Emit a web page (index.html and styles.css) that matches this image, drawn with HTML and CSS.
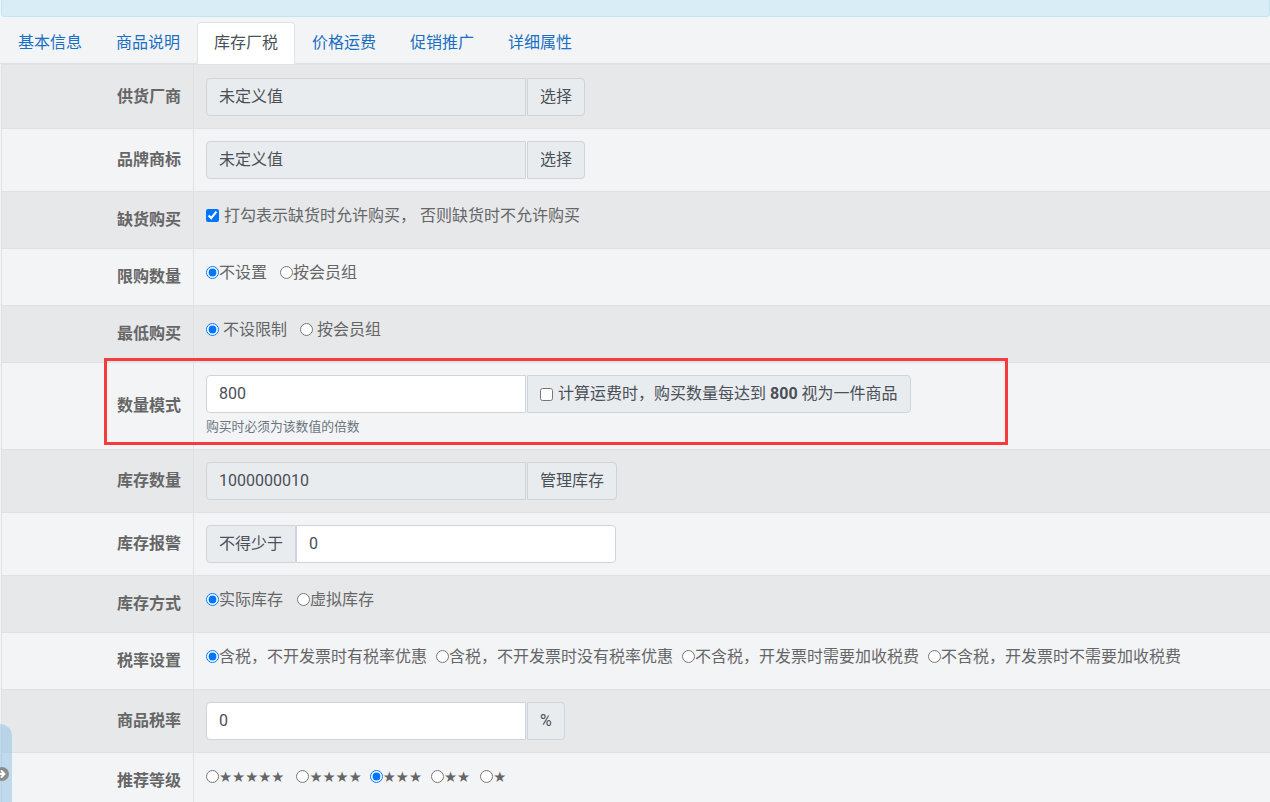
FILE: index.html
```html
<!DOCTYPE html>
<html lang="zh-CN">
<head>
<meta charset="utf-8">
<title>库存厂税</title>
<link rel="stylesheet" href="styles.css">
</head>
<body>
<div class="page">
  <div class="alert"></div>
  <div class="tabbar">
    <ul class="tabs">
      <li class="tab">基本信息</li>
      <li class="tab">商品说明</li>
      <li class="tab active">库存厂税</li>
      <li class="tab">价格运费</li>
      <li class="tab">促销推广</li>
      <li class="tab">详细属性</li>
    </ul>
  </div>
  <table class="form">
    <tr class="dark first">
      <th>供货厂商</th>
      <td><div class="group"><span class="ctl ro">未定义值</span><span class="addon">选择</span></div></td>
    </tr>
    <tr class="light">
      <th>品牌商标</th>
      <td><div class="group"><span class="ctl ro">未定义值</span><span class="addon">选择</span></div></td>
    </tr>
    <tr class="dark">
      <th>缺货购买</th>
      <td class="txt"><label class="opt"><input type="checkbox" class="chk" checked>打勾表示缺货时允许购买， 否则缺货时不允许购买</label></td>
    </tr>
    <tr class="light">
      <th>限购数量</th>
      <td class="txt"><label class="opt g13"><input type="radio" name="xg" checked>不设置</label><label class="opt"><input type="radio" name="xg">按会员组</label></td>
    </tr>
    <tr class="dark">
      <th>最低购买</th>
      <td class="txt"><label class="opt g13"><input type="radio" name="zd" class="sp" checked>不设限制</label><label class="opt"><input type="radio" name="zd" class="sp">按会员组</label></td>
    </tr>
    <tr class="light">
      <th>数量模式</th>
      <td>
        <div class="group"><span class="ctl">800</span><span class="addon"><input type="checkbox" class="chk">计算运费时，购买数量每达到 <b>800</b> 视为一件商品</span></div>
        <div class="hint">购买时必须为该数值的倍数</div>
      </td>
    </tr>
    <tr class="dark">
      <th>库存数量</th>
      <td><div class="group"><span class="ctl ro">1000000010</span><span class="addon">管理库存</span></div></td>
    </tr>
    <tr class="light">
      <th>库存报警</th>
      <td><div class="group"><span class="addon pre">不得少于</span><span class="ctl">0</span></div></td>
    </tr>
    <tr class="dark">
      <th>库存方式</th>
      <td class="txt"><label class="opt g14"><input type="radio" name="kc" checked>实际库存</label><label class="opt"><input type="radio" name="kc">虚拟库存</label></td>
    </tr>
    <tr class="light">
      <th>税率设置</th>
      <td class="txt"><label class="opt g9"><input type="radio" name="sl" checked>含税，不开发票时有税率优惠</label><label class="opt g9"><input type="radio" name="sl">含税，不开发票时没有税率优惠</label><label class="opt g9"><input type="radio" name="sl">不含税，开发票时需要加收税费</label><label class="opt"><input type="radio" name="sl">不含税，开发票时不需要加收税费</label></td>
    </tr>
    <tr class="dark">
      <th>商品税率</th>
      <td><div class="group"><span class="ctl">0</span><span class="addon">%</span></div></td>
    </tr>
    <tr class="light">
      <th>推荐等级</th>
      <td class="txt"><label class="opt g12"><input type="radio" name="tj"><span class="stars">★★★★★</span></label><label class="opt g8"><input type="radio" name="tj"><span class="stars">★★★★</span></label><label class="opt g9"><input type="radio" name="tj" checked><span class="stars">★★★</span></label><label class="opt g10"><input type="radio" name="tj"><span class="stars">★★</span></label><label class="opt"><input type="radio" name="tj"><span class="stars">★</span></label></td>
    </tr>
  </table>
  <div class="mark"></div>
</div>
<div class="side">
  <svg class="side-icon" width="16" height="16" viewBox="0 0 16 16"><circle cx="8" cy="8" r="7" fill="#8c8c8c"/><path d="M4 8h6M7.5 5l3 3-3 3" stroke="#fff" stroke-width="2" fill="none" stroke-linecap="round" stroke-linejoin="round"/></svg>
</div>
</body>
</html>
```
FILE: styles.css
```css
html, body {
  margin: 0;
  padding: 0;
  background: #f3f4f6;
  font-family: Roboto, "Noto Sans CJK SC", sans-serif;
  font-size: 16px;
  line-height: 1.5;
  color: #666;
  overflow: hidden;
}
.page {
  position: relative;
  width: 1270px;
  height: 802px;
  overflow: hidden;
}
.alert {
  height: 16px;
  margin-left: 1px;
  background: #d9edf7;
  border: 1px solid #bce8f1;
  border-top: none;
  border-radius: 0 0 4px 4px;
}
.tabbar {
  padding-top: 5px;
  padding-left: 1px;
  border-bottom: 1px solid #dee2e6;
}
.tabs {
  display: flex;
  list-style: none;
  margin: 0 0 -1px 0;
  padding: 0;
}
.tab {
  padding: 8px 16px;
  border: 1px solid transparent;
  border-radius: 4px 4px 0 0;
  color: #1a6fc2;
  line-height: 24px;
}
.tab.active {
  background: #fff;
  border-color: #dee2e6 #dee2e6 #fff;
  color: #495057;
}
.form {
  border-collapse: collapse;
  margin-left: 1px;
  width: 1269px;
  border-left: 1px solid #dee2e6;
}
.form tr.dark { background: #e7e8ea; }
.form tr.light { background: #f3f4f6; }
.form th {
  width: 179px;
  padding: 16px 12px 16px 0;
  text-align: right;
  vertical-align: middle;
  font-weight: bold;
  color: #666;
  line-height: 24px;
  border-top: 1px solid #dee2e6;
  border-right: 1px solid #dee2e6;
}
.form td {
  padding: 12px;
  vertical-align: top;
  border-top: 1px solid #dee2e6;
  line-height: 24px;
}
.form tr.first td { padding-top: 13px; }
.group {
  display: flex;
  align-items: stretch;
}
.ctl {
  box-sizing: border-box;
  width: 320px;
  height: 38px;
  padding: 6px 12px;
  background: #fff;
  border: 1px solid #ced4da;
  border-radius: 4px 0 0 4px;
  color: #495057;
  line-height: 24px;
}
.ctl.ro { background: #e9ecef; }
.addon {
  display: flex;
  align-items: center;
  height: 38px;
  box-sizing: border-box;
  padding: 6px 12px;
  margin-left: 1px;
  background: #e9ecef;
  border: 1px solid #ced4da;
  border-radius: 0 4px 4px 0;
  color: #495057;
  white-space: nowrap;
}
.addon b { margin: 0 4px; font-weight: bold; }
.addon.pre {
  margin-left: 0;
  margin-right: 0;
  border-radius: 4px 0 0 4px;
}
.addon.pre + .ctl { border-radius: 0 4px 4px 0; }
.addon .chk { margin: 0 5px 0 0; }
.hint {
  margin-top: 4px;
  font-size: 12.8px;
  line-height: 20px;
  color: #6c757d;
}
.txt { white-space: nowrap; }
.opt {
  display: inline-flex;
  align-items: center;
}
.opt input {
  margin: 0;
  width: 13px;
  height: 13px;
  position: relative;
  top: -1px;
}
.opt input.chk { margin-right: 5px; }
.opt input.sp { margin-right: 4px; }
.g8 { margin-right: 8px; }
.g9 { margin-right: 9px; }
.g10 { margin-right: 10px; }
.g12 { margin-right: 12px; }
.g13 { margin-right: 13px; }
.g14 { margin-right: 14px; }
.stars {
  font-family: "DejaVu Sans", sans-serif;
  font-size: 14.6px;
  color: #666;
}
.mark {
  position: absolute;
  left: 104px;
  top: 358px;
  width: 898px;
  height: 81px;
  border: 3px solid #f53b3b;
}
.side {
  position: fixed;
  left: 0;
  top: 724px;
  width: 12px;
  height: 100px;
  background: rgba(150, 195, 228, 0.55);
  border-radius: 0 12px 0 0;
}
.side-icon {
  position: absolute;
  left: -6px;
  top: 42px;
}
```
